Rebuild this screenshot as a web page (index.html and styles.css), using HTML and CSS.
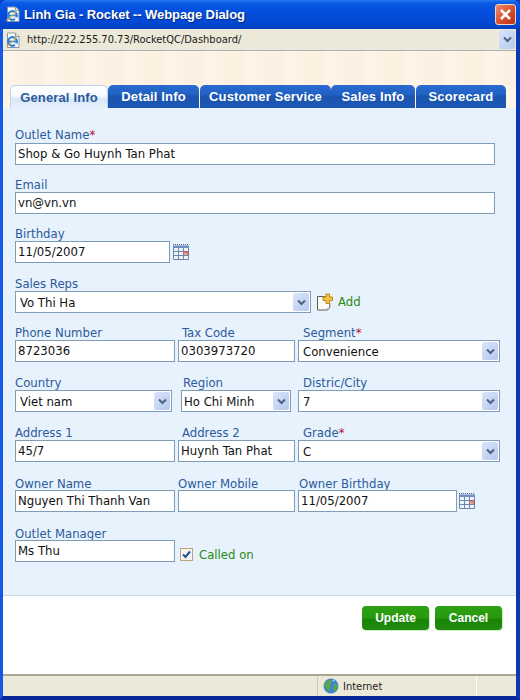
FILE: index.html
```html
<!DOCTYPE html>
<html lang="en">
<head>
  <meta charset="UTF-8">
  <title>Linh Gia - Rocket -- Webpage Dialog</title>
  <link rel="stylesheet" href="styles.css">
</head>
<body>
  <svg class="defs" width="0" height="0">
    <symbol id="ie" viewBox="0 0 16 16">
      <path d="M2.500 1h8l3.500 3.500v11h-11.500z" fill="#fff" stroke="#8a93a3"/>
      <path d="M10.500 1v3.500h3.500" fill="#dfe4ec" stroke="#8a93a3"/>
      <circle cx="7.500" cy="9.500" r="4.300" fill="none" stroke="#2a80d8" stroke-width="2.300"/>
      <path d="M3.500 9.500h8" stroke="#2a80d8" stroke-width="1.700"/>
      <path d="M10 12.800l2-.8" stroke="#fff" stroke-width="2.400"/>
      <path d="M1 14.500c2-.5 6-4 10.500-10" fill="none" stroke="#e7b63c" stroke-width="1.200"/>
    </symbol>
    <symbol id="chev" viewBox="0 0 9 7">
      <path d="M1 1.500l3.500 3.500 3.500-3.500" fill="none" stroke="#4d6185" stroke-width="2"/>
    </symbol>
    <symbol id="cal" viewBox="0 0 16 16">
      <path d="M0 2h16v14h-16z" fill="#eef3fa"/>
      <path d="M0 .5h16" stroke="#56606e" stroke-dasharray="1 1" stroke-width="1"/>
      <path d="M0 1.500h16v2.500h-16z" fill="#6f8fc4"/>
      <path d="M.5 4v11.500h15v-11.500M5.500 4v11.500M10.500 4v11.500M.5 7.500h15M.5 11.500h15" fill="none" stroke="#6d87ad"/>
      <path d="M11 8h4v3h-4z" fill="#e9a49a"/>
      <path d="M11 8h4v3" fill="none" stroke="#d9483b"/>
    </symbol>
    <symbol id="note" viewBox="0 0 18 18">
      <path d="M1.500 3.500h9l3 3v8.500l-2 2h-10z" fill="#fbfbf6" stroke="#5b5b55"/>
      <path d="M11 15.500l3-.5v-5" fill="none" stroke="#b2b2a8"/>
      <path d="M10 1h3.500v3h3v3.500h-3v3h-3.500v-3h-3v-3.500h3z" fill="#f5c33f" stroke="#bf8a1f"/>
    </symbol>
    <symbol id="globe" viewBox="0 0 16 16">
      <circle cx="8" cy="8" r="7.500" fill="#3f86cc"/>
      <path d="M3 3.500l4-2 2 2-2 3 1 3-2.500 4-2-3-2.500-3zM11 6l3.500 1-.5 4-2.500 3-1-4z" fill="#58a84e"/>
      <path d="M9 1.500l2.500.5-1 1.500z" fill="#cfe3f5"/>
    </symbol>
  </svg>

  <div class="window">
    <div class="titlebar">
      <svg class="title-icon"><use href="#ie"/></svg>
      <span class="title-text">Linh Gia - Rocket -- Webpage Dialog</span>
      <span class="close">
        <svg width="13" height="13" viewBox="0 0 13 13"><path d="M2 2l9 9M11 2l-9 9" stroke="#fff" stroke-width="2.600"/></svg>
      </span>
    </div>

    <div class="frame">
      <div class="addressbar">
        <svg class="addr-icon"><use href="#ie"/></svg>
        <span class="addr-url">http://222.255.70.73/RocketQC/Dashboard/</span>
        <span class="arrow arrow-addr"><svg width="9" height="7"><use href="#chev"/></svg></span>
      </div>

      <div class="banner"></div>

      <div class="tabs">
        <a class="tab tab-active tab-general">General Info</a>
        <a class="tab tab-detail">Detail Info</a>
        <a class="tab tab-service">Customer Service</a>
        <a class="tab tab-sales">Sales Info</a>
        <a class="tab tab-score">Scorecard</a>
      </div>

      <form class="panel">
        <div class="row row-tight row-first">
          <div class="field w-480">
            <label>Outlet Name<span class="req">*</span></label>
            <input type="text" value="Shop &amp; Go Huynh Tan Phat">
          </div>
        </div>

        <div class="row row-tight">
          <div class="field w-480">
            <label>Email</label>
            <input type="text" value="vn@vn.vn">
          </div>
        </div>

        <div class="row">
          <div class="field w-174">
            <label>Birthday</label>
            <div class="inline">
              <input type="text" value="11/05/2007">
              <svg class="cal"><use href="#cal"/></svg>
            </div>
          </div>
        </div>

        <div class="row row-tight">
          <div class="field w-296">
            <label>Sales Reps</label>
            <div class="select-box">
              <select><option>Vo Thi Ha</option></select>
              <span class="arrow"><svg width="9" height="7"><use href="#chev"/></svg></span>
            </div>
          </div>
          <a class="add-link"><svg class="note"><use href="#note"/></svg>Add</a>
        </div>

        <div class="row cols">
          <div class="field">
            <label>Phone Number</label>
            <input type="text" value="8723036">
          </div>
          <div class="field">
            <label class="lab-in3">Tax Code</label>
            <input type="text" value="0303973720">
          </div>
          <div class="field">
            <label class="lab-in5">Segment<span class="req">*</span></label>
            <div class="select-box">
              <select><option>Convenience</option></select>
              <span class="arrow"><svg width="9" height="7"><use href="#chev"/></svg></span>
            </div>
          </div>
        </div>

        <div class="row cols">
          <div class="field">
            <label>Country</label>
            <div class="select-box box-country">
              <select><option>Viet nam</option></select>
              <span class="arrow"><svg width="9" height="7"><use href="#chev"/></svg></span>
            </div>
          </div>
          <div class="field">
            <label class="lab-in5">Region</label>
            <div class="select-box box-region">
              <select><option>Ho Chi Minh</option></select>
              <span class="arrow"><svg width="9" height="7"><use href="#chev"/></svg></span>
            </div>
          </div>
          <div class="field">
            <label class="lab-in5">Distric/City</label>
            <div class="select-box">
              <select><option>7</option></select>
              <span class="arrow"><svg width="9" height="7"><use href="#chev"/></svg></span>
            </div>
          </div>
        </div>

        <div class="row cols">
          <div class="field">
            <label>Address 1</label>
            <input type="text" value="45/7">
          </div>
          <div class="field">
            <label class="lab-in3">Address 2</label>
            <input type="text" value="Huynh Tan Phat">
          </div>
          <div class="field">
            <label class="lab-in5">Grade<span class="req">*</span></label>
            <div class="select-box">
              <select><option>C</option></select>
              <span class="arrow"><svg width="9" height="7"><use href="#chev"/></svg></span>
            </div>
          </div>
        </div>

        <div class="row cols row-low">
          <div class="field">
            <label>Owner Name</label>
            <input type="text" value="Nguyen Thi Thanh Van">
          </div>
          <div class="field">
            <label>Owner Mobile</label>
            <input type="text" value="">
          </div>
          <div class="field">
            <label class="lab-in1">Owner Birthday</label>
            <div class="inline inline-wide">
              <input type="text" value="11/05/2007">
              <svg class="cal"><use href="#cal"/></svg>
            </div>
          </div>
        </div>

        <div class="row row-low">
          <div class="field w-160">
            <label>Outlet Manager</label>
            <input type="text" value="Ms Thu">
          </div>
          <label class="called"><span class="checkbox">
            <svg width="9" height="9" viewBox="0 0 9 9"><path d="M1 4.500l2.500 2.500 4.500-5.500" fill="none" stroke="#1f4e9c" stroke-width="2"/></svg>
          </span>Called on</label>
        </div>
      </form>

      <div class="footer">
        <button class="btn" type="button">Update</button>
        <button class="btn" type="button">Cancel</button>
      </div>

      <div class="statusbar">
        <span class="status-main"></span>
        <span class="status-zone"><svg class="globe"><use href="#globe"/></svg>Internet</span>
        <span class="status-end"></span>
      </div>
    </div>
  </div>
</body>
</html>
```

FILE: styles.css
```css
* { box-sizing: border-box; }
html, body { margin: 0; padding: 0; }
body { width: 520px; height: 700px; overflow: hidden; font-family: "DejaVu Sans Condensed", "DejaVu Sans", sans-serif; font-size: 13px; }
.defs { display: block; height: 0; }

.window { width: 520px; height: 700px; display: flex; flex-direction: column; background: #0a3fc8; }

/* title bar */
.titlebar { height: 29px; flex: none; display: flex; align-items: center; padding: 0 4px 1px 5px; border-radius: 7px 7px 0 0; background: linear-gradient(#2a7af0 0, #0a5be6 3px, #0552e0 8px, #0348d4 22px, #0340c0 100%); }
.title-icon { width: 16px; height: 16px; margin-right: 3px; }
.title-text { flex: 1; color: #fff; font-family: "Liberation Sans", sans-serif; font-size: 13px; font-weight: bold; letter-spacing: -.08px; text-shadow: 1px 1px 1px #0a2a80; }
.close { width: 21px; height: 21px; display: flex; align-items: center; justify-content: center; border: 1px solid #f2d6cc; border-radius: 3px; background: linear-gradient(135deg, #ee8a66, #cf4020 70%, #b8351a); }

/* everything inside the blue frame */
.frame { flex: 1; display: flex; flex-direction: column; min-height: 0; background: #fff; border-left: 3px solid #1558e6; border-right: 4px solid #0a3ab0; border-bottom: 4px solid #08289a; }

.addressbar { height: 22px; flex: none; display: flex; align-items: center; padding-left: 2px; background: #ece9d8; border-bottom: 1px solid #a9b0bc; }
.addr-icon { width: 16px; height: 16px; margin-right: 6px; }
.addr-url { flex: 1; color: #1a1a1a; font-size: 11px; }
.arrow { width: 16px; height: 18px; flex: none; display: flex; align-items: center; justify-content: center; border-radius: 2px; background: linear-gradient(135deg, #dbe5fa, #b5c8ef); }
.arrow-addr { height: 19px; margin-right: 1px; }

.banner { height: 34px; flex: none; background: repeating-linear-gradient(90deg, #fdf3e6 0, #fdf3e6 20px, #fcf0e1 20px, #fcf0e1 40px); }

/* tabs */
.tabs { height: 23px; flex: none; display: flex; align-items: stretch; padding-left: 7px; background: #fdf3e6; }
.tab { display: flex; align-items: center; justify-content: center; border-radius: 5px 5px 0 0; color: #fff; font-family: "Liberation Sans", sans-serif; font-size: 13px; font-weight: bold; letter-spacing: .15px; background: linear-gradient(#2b6ad0 0, #2062c4 40%, #1c55ae 50%, #1a58b4 100%); }
.tab-active { color: #2b5a9c; background: linear-gradient(#ffffff 0, #f6fafe 45%, #d7e6f6 60%, #e8f2fd 100%); border: 1px solid #bcd3ec; border-bottom: 0; }
.tab-general { width: 98px; }
.tab-detail { width: 91px; margin-right: 1px; }
.tab-service { width: 131px; }
.tab-sales { width: 84px; margin-right: 1px; }
.tab-score { width: 90px; }

/* form */
.panel { height: 488px; flex: none; padding: 19px 0 0 12px; background: #e8f2fd; border-bottom: 1px solid #c3dcec; }
.row { display: flex; align-items: flex-end; margin-bottom: 12px; }
.row-tight { margin-bottom: 11px; }
.cols { display: grid; grid-template-columns: 160px 117px 202px; column-gap: 3px; }
.field { display: flex; flex-direction: column; min-width: 0; }
.w-480 { width: 480px; }
.w-296 { width: 296px; }
.w-160 { width: 160px; }
.w-174 { width: 174px; }
.field > label { height: 16px; color: #2b5a9c; line-height: 18px; white-space: nowrap; }
.row-first .field > label { line-height: 15px; }
.row-low .field > label { line-height: 20px; }
.lab-in1 { padding-left: 1px; }
.lab-in3 { padding-left: 4px; }
.lab-in5 { padding-left: 5px; }
.req { color: #b01030; }
input[type="text"] { width: 100%; height: 22px; padding: 0 2px 1px; border: 1px solid #7f9db9; background: #fff; color: #111; font-family: inherit; font-size: 13px; }
.inline { display: flex; align-items: center; }
.inline input[type="text"] { width: 155px; flex: none; }
.inline-wide input[type="text"] { width: 159px; }
.cal { width: 16px; height: 16px; flex: none; margin-left: 3px; }
.inline-wide .cal { margin-left: 2px; }

.select-box { height: 22px; display: flex; align-items: center; padding-right: 1px; border: 1px solid #7f9db9; background: #fff; }
.select-box select { flex: 1; min-width: 0; height: 100%; padding: 0 0 0 4px; border: 0; outline: 0; appearance: none; background: transparent; color: #111; font-family: inherit; font-size: 13px; }
.box-country { width: 157px; }
.box-region { width: 110px; margin-left: 3px; }
.box-region select { padding-left: 2px; }

.add-link { display: flex; align-items: center; height: 22px; margin-left: 5px; padding-bottom: 1px; color: #2a8a10; }
.note { width: 18px; height: 18px; margin-right: 4px; }

.called { display: flex; align-items: center; height: 22px; margin: 0 0 -3px 5px; color: #2a8a10; }
.checkbox { width: 13px; height: 13px; display: flex; align-items: center; justify-content: center; margin-right: 6px; border: 1px solid #c0a080; background: #f6f4ea; }

/* buttons */
.footer { flex: 1; min-height: 0; display: flex; justify-content: flex-end; align-items: flex-start; gap: 6px; padding: 10px 14px 0 0; background: #fff; }
.btn { width: 67px; height: 24px; padding: 0; border: 0; border-radius: 4px; color: #fff; font-family: "Liberation Sans", sans-serif; font-size: 12px; font-weight: bold; background: linear-gradient(#2ea012 0, #279a0e 50%, #1a840a 55%, #1f8a0c 100%); box-shadow: 1px 1px 1px #cde8c2; }

/* status bar */
.statusbar { height: 22px; flex: none; display: flex; background: #ece9d8; border-top: 2px solid #a9a694; color: #222; }
.status-main { width: 315px; border-right: 1px solid #cfccb8; }
.status-zone { width: 159px; display: flex; align-items: center; padding-left: 5px; font-size: 11px; border-right: 1px solid #fff; }
.status-end { flex: 1; }
.globe { width: 16px; height: 16px; margin-right: 4px; }
```
